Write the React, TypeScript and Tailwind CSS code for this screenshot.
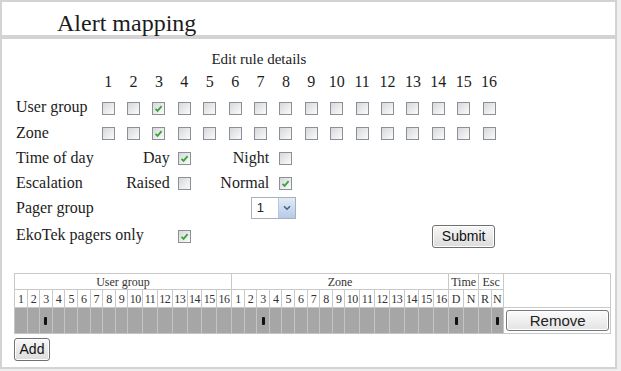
const nums = Array.from({ length: 16 }, (_, i) => i + 1);

function Check({ checked = false }: { checked?: boolean }) {
  return (
    <span className="relative inline-block w-[13px] h-[13px] border border-[#8c9096] bg-linear-to-br from-[#d6d8db] to-[#fbfbfb]">
      {checked && (
        <svg viewBox="0 0 11 11" className="absolute inset-0 w-[11px] h-[11px]">
          <path d="M2.5 5.8 L4.6 7.9 L8.6 3.2" fill="none" stroke="#3ba33b" strokeWidth="1.8" />
        </svg>
      )}
    </span>
  );
}

function Mark() {
  return <span className="inline-block w-[3px] h-[8px] rounded-[1px] bg-[#111]" />;
}

const sans = "font-['Liberation_Sans',Arial,sans-serif]";

export default function App() {
  const cellW = (i: number) => (i < 9 ? "w-[12.6px]" : "w-[14.8px]");
  return (
    <div className="w-[621px] h-[371px] overflow-hidden bg-[#efefef] font-['Liberation_Serif',serif] text-[#1c1c1c]">
      <div className="w-[617px] h-[37px] border-2 border-[#d3d3d3] bg-white pl-[55px] pt-[3px] text-[24px] leading-normal">
        Alert mapping
      </div>
      <div className="w-[617px] h-[332px] border-2 border-[#d3d3d3] bg-white pt-[9px]">
        <div className="ml-[14px] grid grid-cols-[79.5px_repeat(16,25.4px)] grid-rows-[22px_24px_26px_25px_25px_25px_26px_28px] items-center text-[16px]">
          <div className="col-span-17 text-center text-[15px]">Edit rule details</div>

          <div />
          {nums.map((n) => (
            <div key={n} className="text-center">{n}</div>
          ))}

          <div className="whitespace-nowrap">User group</div>
          {nums.map((n) => (
            <div key={n} className="flex justify-center pt-[2px]">
              <Check checked={n === 3} />
            </div>
          ))}

          <div>Zone</div>
          {nums.map((n) => (
            <div key={n} className="flex justify-center pt-[2px]">
              <Check checked={n === 3} />
            </div>
          ))}

          <div className="whitespace-nowrap">Time of day</div>
          <div className="col-span-3 text-right pr-[2px]">Day</div>
          <div className="flex justify-center pt-[2px]"><Check checked /></div>
          <div className="col-span-3 text-right pr-[4px]">Night</div>
          <div className="flex justify-center pt-[2px]"><Check /></div>
          <div className="col-span-8" />

          <div>Escalation</div>
          <div className="col-span-3 text-right pr-[2px]">Raised</div>
          <div className="flex justify-center pt-[2px]"><Check /></div>
          <div className="col-span-3 text-right pr-[4px]">Normal</div>
          <div className="flex justify-center pt-[2px]"><Check checked /></div>
          <div className="col-span-8" />

          <div className="whitespace-nowrap">Pager group</div>
          <div className="col-span-6" />
          <div className="col-span-2 flex justify-center">
            <div className="flex w-[45px] h-[22px] border border-[#a7b0bb] bg-white">
              <span className={`flex-1 pl-[5px] ${sans} text-[13px] leading-[20px] text-[#222]`}>1</span>
              <span className="flex w-[17px] items-center justify-center border-l border-[#b7c7dd] bg-linear-to-b from-[#e2ebf7] to-[#b6cbe8]">
                <svg viewBox="0 0 8 6" className="w-[8px] h-[6px]">
                  <path d="M1 1.2 L4 4.2 L7 1.2" fill="none" stroke="#4a5f86" strokeWidth="1.6" />
                </svg>
              </span>
            </div>
          </div>
          <div className="col-span-8" />

          <div className="col-span-4 whitespace-nowrap">EkoTek pagers only</div>
          <div className="flex justify-center pt-[2px]"><Check checked /></div>
          <div className="col-span-9" />
          <div className="col-span-3 flex justify-center pt-[3px]">
            <button className={`w-[63px] h-[23px] rounded-[3px] border border-[#707070] bg-linear-to-b from-[#f7f7f7] to-[#dcdcdc] ${sans} text-[14px] text-[#111] shadow-[inset_0_0_0_1px_#fff]`}>
              Submit
            </button>
          </div>
        </div>

        <table className="ml-[12px] mt-[24px] w-[597px] table-fixed border-collapse text-[12px] leading-none text-[#333]">
          <colgroup>
            {nums.map((n, i) => <col key={"u" + n} className={cellW(i)} />)}
            {nums.map((n, i) => <col key={"z" + n} className={cellW(i)} />)}
            <col className="w-[15px]" />
            <col className="w-[15px]" />
            <col className="w-[12.5px]" />
            <col className="w-[12.5px]" />
            <col />
          </colgroup>
          <tbody>
            <tr className="h-[16px]">
              <td colSpan={16} className="border border-[#c9c9c9] text-center p-0">User group</td>
              <td colSpan={16} className="border border-[#c9c9c9] text-center p-0">Zone</td>
              <td colSpan={2} className="border border-[#c9c9c9] text-center p-0">Time</td>
              <td colSpan={2} className="border border-[#c9c9c9] text-center p-0">Esc</td>
              <td rowSpan={2} className="border border-[#c9c9c9] p-0" />
            </tr>
            <tr className="h-[18px]">
              {nums.map((n) => (
                <td key={"u" + n} className="border border-[#c9c9c9] text-center p-0 tracking-[-0.5px]">{n}</td>
              ))}
              {nums.map((n) => (
                <td key={"z" + n} className="border border-[#c9c9c9] text-center p-0 tracking-[-0.5px]">{n}</td>
              ))}
              {["D", "N", "R", "N"].map((t, i) => (
                <td key={t + i} className="border border-[#c9c9c9] text-center p-0">{t}</td>
              ))}
            </tr>
            <tr className="h-[26px]">
              {nums.map((n) => (
                <td key={"u" + n} className="border border-[#c4c4c4] bg-[#a6a6a6] text-center p-0">
                  {n === 3 && <Mark />}
                </td>
              ))}
              {nums.map((n) => (
                <td key={"z" + n} className="border border-[#c4c4c4] bg-[#a6a6a6] text-center p-0">
                  {n === 3 && <Mark />}
                </td>
              ))}
              {[true, false, false, true].map((on, i) => (
                <td key={"t" + i} className="border border-[#c4c4c4] bg-[#a6a6a6] text-center p-0">
                  {on && <Mark />}
                </td>
              ))}
              <td className="border border-[#c9c9c9] p-0 pl-[2px]">
                <button className={`w-[103px] h-[21px] rounded-[3px] border border-[#6f7780] bg-linear-to-b from-[#fbfbfb] to-[#e3e3e3] ${sans} text-[15px] text-[#222] shadow-[inset_0_0_0_1px_#fff]`}>
                  Remove
                </button>
              </td>
            </tr>
          </tbody>
        </table>

        <button className={`ml-[12px] mt-[4px] w-[36px] h-[23px] rounded-[3px] border border-[#707070] bg-linear-to-b from-[#f7f7f7] to-[#dcdcdc] ${sans} text-[14px] text-[#111] shadow-[inset_0_0_0_1px_#fff]`}>
          Add
        </button>
      </div>
    </div>
  );
}
